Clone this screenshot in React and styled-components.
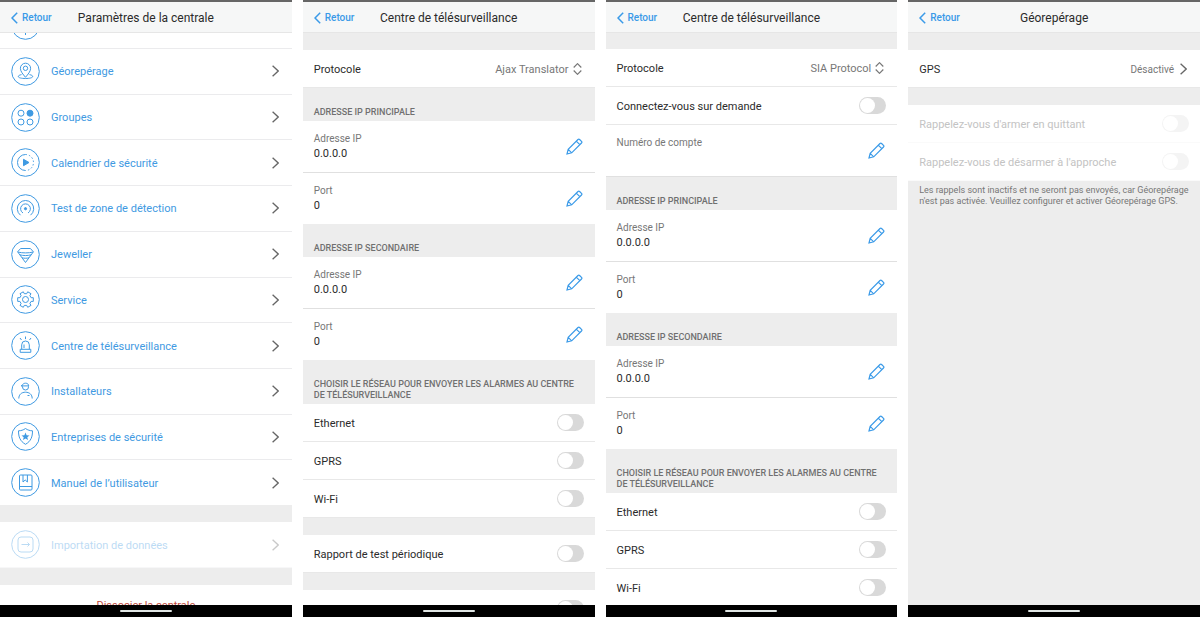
import { useState } from 'react';
import styled, { createGlobalStyle } from 'styled-components';

const menu = [
  { icon: 'geo', label: 'Géorepérage' },
  { icon: 'groups', label: 'Groupes' },
  { icon: 'calendar', label: 'Calendrier de sécurité' },
  { icon: 'zone', label: 'Test de zone de détection' },
  { icon: 'jeweller', label: 'Jeweller' },
  { icon: 'service', label: 'Service' },
  { icon: 'siren', label: 'Centre de télésurveillance' },
  { icon: 'installer', label: 'Installateurs' },
  { icon: 'shield', label: 'Entreprises de sécurité' },
  { icon: 'manual', label: 'Manuel de l’utilisateur' },
];

const protocols = ['Ajax Translator', 'SIA Protocol'];
const networks = ['Ethernet', 'GPRS', 'Wi-Fi'];

// drawings inside the round menu icons, 29x29 box
const glyphs = {
  hub: <path d="M14.5 19v5" />,
  geo: (
    <>
      <path d="M14.5 20.3c-2.6-3.2-5.1-5.8-5.1-9a5.1 5.1 0 0 1 10.2 0c0 3.2-2.5 5.8-5.1 9z" />
      <circle cx="14.5" cy="11.3" r="2.2" />
      <path d="M10.5 17.6c-1.9.4-3.2 1-3.2 1.9 0 1.3 3.2 2 7.2 2s7.200-.7 7.200-2c0-.9-1.300-1.500-3.200-1.900" />
    </>
  ),
  groups: (
    <>
      <circle cx="10" cy="10.2" r="3" />
      <circle cx="19" cy="10.2" r="3" fill="currentColor" />
      <circle cx="10" cy="19" r="3" />
      <circle cx="19" cy="19" r="3" />
    </>
  ),
  calendar: (
    <>
      <path d="M14.5 6.5a8 8 0 0 0 0 16" />
      <path d="M14.5 6.5a8 8 0 0 1 0 16" strokeDasharray="1.5 2" />
      <path d="M12.5 11.3l5.5 3.2-5.5 3.2z" fill="currentColor" />
    </>
  ),
  zone: (
    <>
      <circle cx="14.5" cy="14.7" r="1.1" fill="currentColor" />
      <path d="M12 19a4.9 4.9 0 1 1 5 0" />
      <path d="M9.5 21.2a8.200 8.200 0 1 1 10 0" />
    </>
  ),
  jeweller: (
    <>
      <path d="M9.6 8.5h9.8l3 3.3-7.9 10.7-7.9-10.7z" />
      <path d="M6.8 12c4.5 1.2 10.9 1.2 15.4 0M8.8 14.8c3.5 1 7.9 1 11.4 0M11 17.8c2.2.6 4.8.6 7 0" />
    </>
  ),
  service: (
    <>
      <circle cx="14.5" cy="14.5" r="3" />
      <path
        strokeLinejoin="round"
        d="M12.3 6.8l1 1.9h2.4l1-1.900 3.300 1.900-1.100 1.900 1.200 2.100h2.200v3.700h-2.200l-1.200 2.100 1.100 1.900-3.300 1.900-1-1.900h-2.400l-1 1.900L9 20.400l1.100-1.900-1.200-2.100H6.700v-3.700h2.200l1.200-2.100L9 8.700z"
      />
    </>
  ),
  siren: (
    <>
      <path d="M10.7 18.3v-4.500a3.800 3.800 0 0 1 7.600 0v4.500M9.200 18.300h10.600v3H9.200zM13 17v-3.500" />
      <path d="M14.5 5.5v2.600M9 7l1.500 2M20 7l-1.500 2" />
    </>
  ),
  installer: (
    <>
      <path d="M11.5 9.300v.7a3 3 0 0 0 6 0v-.7" />
      <path d="M10 8.900h7.700c0-1.700-1.300-2.700-3.200-2.700-1.800 0-2.900.9-3.100 2.100z" />
      <path d="M7.800 21.500c0-4 2.800-6.300 6.700-6.300s6.700 2.300 6.700 6.300M16.500 18.500h2" />
    </>
  ),
  shield: (
    <>
      <path d="M14.5 6.5c2.200 1.600 4.600 2.300 7 2.300 0 6-1.500 10.400-7 13.500-5.500-3.100-7-7.500-7-13.500 2.400 0 4.800-.7 7-2.300z" />
      <path
        fill="currentColor"
        stroke="none"
        d="M14.5 10.500l1.100 2.700 2.900.2-2.200 1.900.7 2.800-2.500-1.500-2.500 1.500.7-2.800-2.200-1.900 2.900-.2z"
      />
    </>
  ),
  manual: (
    <>
      <rect x="8.5" y="7" width="12.500" height="15" rx="1" />
      <path d="M8.500 18.500H21M12 7v7l2.200-2 2.200 2V7" />
    </>
  ),
  import: (
    <>
      <rect x="7" y="7" width="15" height="15" rx="3" />
      <path d="M10.5 14.500h8M16.500 12.500l2 2-2 2" />
    </>
  ),
};

function RoundIcon({ name }) {
  return (
    <RoundSvg viewBox="0 0 29 29" aria-hidden="true">
      <circle cx="14.5" cy="14.5" r="13.8" />
      {glyphs[name]}
    </RoundSvg>
  );
}

function Chevron() {
  return (
    <ChevronSvg viewBox="0 0 7 12" aria-hidden="true">
      <path d="M.6.7L6.200 6 .6 11.300" />
    </ChevronSvg>
  );
}

function Screen({ title, gray, children }) {
  return (
    <Phone>
      <Header>
        <Back href="#">
          <svg width="7" height="12" viewBox="0 0 7 12" strokeWidth="1.5" aria-hidden="true">
            <path d="M6.200.7L1 6l5.200 5.300" />
          </svg>
          Retour
        </Back>
        <Title>{title}</Title>
      </Header>
      <Content $gray={gray}>{children}</Content>
      <SystemBar>
        <HomeLine />
      </SystemBar>
    </Phone>
  );
}

function ToggleRow({ label, disabled }) {
  const [on, setOn] = useState(false);
  return (
    <SwitchRow $disabled={disabled}>
      <RowText>{label}</RowText>
      <Switch type="checkbox" checked={on} disabled={disabled} onChange={(e) => setOn(e.target.checked)} />
    </SwitchRow>
  );
}

function ProtocolRow({ initial }) {
  const [protocol, setProtocol] = useState(initial);
  return (
    <SwitchRow>
      <RowText>Protocole</RowText>
      <Picker>
        <Select value={protocol} onChange={(e) => setProtocol(e.target.value)}>
          {protocols.map((item) => <option key={item}>{item}</option>)}
        </Select>
        <svg width="9" height="12" viewBox="0 0 9 12" strokeWidth="1.2" aria-hidden="true">
          <path d="M.7 4.500L4.500.7l3.800 3.800M.7 7.500l3.800 3.800 3.800-3.800" />
        </svg>
      </Picker>
    </SwitchRow>
  );
}

function Field({ label, value, divided }) {
  return (
    <FieldRow $divided={divided}>
      <div>
        <FieldLabel>{label}</FieldLabel>
        <FieldValue>{value}</FieldValue>
      </div>
      <EditButton type="button" aria-label={'Modifier ' + label}>
        <svg width="17" height="17" viewBox="0 0 17 17" strokeWidth="1.2" aria-hidden="true">
          <path d="M1 16l1.200-4.700L12 1.500q.8-.8 1.600 0l1.900 1.900q.8.8 0 1.600L5.700 14.800zM2.200 11.300l3.500 3.500M10.300 3.200l3.500 3.500" />
        </svg>
      </EditButton>
    </FieldRow>
  );
}

function Addresses() {
  return (
    <>
      <Section>ADRESSE IP PRINCIPALE</Section>
      <Field label="Adresse IP" value="0.0.0.0" divided />
      <Field label="Port" value="0" />
      <Section>ADRESSE IP SECONDAIRE</Section>
      <Field label="Adresse IP" value="0.0.0.0" divided />
      <Field label="Port" value="0" />
      <Section>CHOISIR LE RÉSEAU POUR ENVOYER LES ALARMES AU CENTRE DE TÉLÉSURVEILLANCE</Section>
      {networks.map((item) => <ToggleRow key={item} label={item} />)}
    </>
  );
}

function App() {
  return (
    <>
      <GlobalStyle />
      <Board>
        <Screen title="Paramètres de la centrale">
          <Peek>
            <MenuRow href="#" aria-label="Centrale">
              <RoundIcon name="hub" />
            </MenuRow>
          </Peek>
          <Menu>
            {menu.map((item) => (
              <MenuRow href="#" key={item.icon}>
                <RoundIcon name={item.icon} />
                <RowText>{item.label}</RowText>
                <Chevron />
              </MenuRow>
            ))}
          </Menu>
          <Gap />
          <MenuRow href="#" aria-disabled="true" $disabled>
            <RoundIcon name="import" />
            <RowText>Importation de données</RowText>
            <Chevron />
          </MenuRow>
          <Gap />
          <Peek $top>
            <Unlink type="button">
              <RowText>Dissocier la centrale</RowText>
            </Unlink>
          </Peek>
        </Screen>

        <Screen title="Centre de télésurveillance">
          <Gap />
          <ProtocolRow initial="Ajax Translator" />
          <Addresses />
          <Gap />
          <ToggleRow label="Rapport de test périodique" />
          <Gap />
          <ToggleRow label="Envoyer les coordonnées" />
        </Screen>

        <Screen title="Centre de télésurveillance">
          <Gap $small />
          <ProtocolRow initial="SIA Protocol" />
          <ToggleRow label="Connectez-vous sur demande" />
          <Field label="Numéro de compte" divided />
          <Addresses />
        </Screen>

        <Screen title="Géorepérage" gray>
          <Gap />
          <LinkRow href="#">
            <RowText>GPS</RowText>
            <Status>
              <RowText>Désactivé</RowText>
              <Chevron />
            </Status>
          </LinkRow>
          <Gap />
          <ToggleRow label="Rappelez-vous d'armer en quittant" disabled />
          <ToggleRow label="Rappelez-vous de désarmer à l'approche" disabled />
          <Note>
            Les rappels sont inactifs et ne seront pas envoyés, car Géorepérage n'est pas activée. Veuillez configurer et activer Géorepérage GPS.
          </Note>
        </Screen>
      </Board>
    </>
  );
}

export default App;

const GlobalStyle = createGlobalStyle`
  * {
    box-sizing: border-box;
  }

  body {
    margin: 0;
    background: #fff;
    color: #2b2b2b;
    font-family: Roboto, "Liberation Sans", sans-serif;
    font-size: 11px;
    line-height: 14px;
  }

  button, select {
    font: inherit;
    border: 0;
    padding: 0;
    background: none;
  }

  a {
    color: inherit;
    text-decoration: none;
  }

  svg {
    display: block;
    flex: none;
    fill: none;
    stroke: currentColor;
  }
`

const Board = styled.main`
  display: grid;
  grid-template-columns: repeat(4, minmax(0, 1fr));
  gap: 11px;
  height: 100vh;
`

const Phone = styled.section`
  display: flex;
  flex-direction: column;
  min-height: 0;
`

const Header = styled.header`
  flex: none;
  display: grid;
  grid-template-columns: 1fr auto 1fr;
  align-items: center;
  height: 33px;
  padding: 1px 11px 0;
  background: #f6f7f7;
  border-top: 2px solid #666;
  border-bottom: 1px solid #e6e6e6;
`

const Back = styled.a`
  display: flex;
  align-items: center;
  gap: 4px;
  color: #3a9ae8;
  font-size: 10px;
  font-weight: 500;
`

const Title = styled.h1`
  margin: 0;
  font-size: 12px;
  font-weight: 400;
`

const Content = styled.div`
  flex: 1;
  min-height: 0;
  display: flex;
  flex-direction: column;
  overflow: hidden;
  background: ${(p) => (p.$gray ? '#ededed' : '#fff')};
`

const SystemBar = styled.footer`
  flex: none;
  display: flex;
  align-items: center;
  justify-content: center;
  height: 12px;
  background: #000;
`

const HomeLine = styled.div`
  width: 52px;
  height: 2px;
  border-radius: 1px;
  background: #dfe5e3;
`

const Gap = styled.div`
  flex: none;
  height: ${(p) => (p.$small ? '16px' : '17px')};
  background: #ededed;
`

const Peek = styled.div`
  flex: none;
  display: flex;
  flex-direction: column;
  justify-content: ${(p) => (p.$top ? 'flex-start' : 'flex-end')};
  height: ${(p) => (p.$top ? '20px' : '16px')};
  overflow: hidden;
`

const Menu = styled.nav`
  flex: 1;
  display: flex;
  flex-direction: column;

  & > a {
    flex: 1;
  }

  & > a:last-child {
    border-bottom: 0;
  }
`

const MenuRow = styled.a`
  flex: none;
  display: flex;
  align-items: center;
  gap: 11px;
  height: 46px;
  padding: 0 13px 0 11px;
  color: #3f9ae2;
  border-bottom: 1px solid #ebebed;
  opacity: ${(p) => (p.$disabled ? 0.35 : 1)};
`

const RowText = styled.span`
  flex: 1;
  padding-top: 2px;
`

const RoundSvg = styled.svg`
  width: 29px;
  height: 29px;
`

const ChevronSvg = styled.svg`
  width: 7px;
  height: 12px;
  color: #666;
  stroke-width: 1.3;
`

const Unlink = styled.button`
  display: flex;
  flex: none;
  align-items: center;
  height: 39px;
  color: #c0483a;
`

const SwitchRow = styled.label`
  flex: none;
  display: flex;
  align-items: center;
  justify-content: space-between;
  height: 38px;
  padding: 0 11px;
  background: #fff;
  border-bottom: 1px solid ${(p) => (p.$disabled ? '#fafafa' : '#e8e8e8')};
  color: ${(p) => (p.$disabled ? '#c3c3c3' : 'inherit')};
`

const Switch = styled.input`
  appearance: none;
  display: flex;
  width: 27px;
  height: 17px;
  margin: 0;
  padding: 1px;
  border-radius: 9px;
  background: #d9d9d9;

  &::before {
    content: '';
    width: 15px;
    height: 15px;
    border-radius: 50%;
    background: #fff;
  }

  &:checked {
    justify-content: flex-end;
    background: #3a9ae8;
  }

  &:disabled {
    background: #f4f4f4;
  }
`

const Picker = styled.span`
  display: flex;
  align-items: center;
  gap: 4px;
  padding-right: 2px;
  color: #777;
`

const Select = styled.select`
  appearance: none;
  padding-top: 2px;
  color: inherit;
  text-align-last: right;
`

const Section = styled.h2`
  flex: none;
  margin: 0;
  padding: 19px 11px 3px;
  background: #ededed;
  color: #707070;
  font-size: 9px;
  font-weight: 500;
  line-height: 11px;
`

const FieldRow = styled.div`
  flex: none;
  display: flex;
  align-items: center;
  justify-content: space-between;
  height: ${(p) => (p.$divided ? '52px' : '51px')};
  padding: 0 12px 0 11px;
  border-bottom: ${(p) => (p.$divided ? '1px solid #e0e0e0' : '0')};
`

const FieldLabel = styled.div`
  color: #777;
  font-size: 10px;
`

const FieldValue = styled.div`
  min-height: 15px;
  line-height: 15px;
`

const EditButton = styled.button`
  color: #3a9ae8;
`

const LinkRow = styled.a`
  flex: none;
  display: flex;
  align-items: center;
  justify-content: space-between;
  height: 38px;
  padding: 0 13px 0 11px;
  background: #fff;
  border-bottom: 1px solid #e8e8e8;
`

const Status = styled.span`
  display: flex;
  align-items: center;
  gap: 6px;
  color: #777;
  font-size: 10px;
`

const Note = styled.p`
  margin: 0;
  padding: 4px 11px;
  color: #777;
  font-size: 9px;
  line-height: 11px;
`
